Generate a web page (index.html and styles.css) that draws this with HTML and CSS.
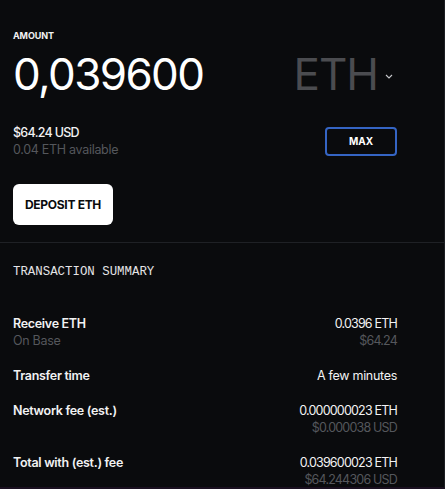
FILE: index.html
```html
<!DOCTYPE html>
<html lang="en">
<head>
  <meta charset="UTF-8">
  <meta name="viewport" content="width=device-width, initial-scale=1.0">
  <title>Deposit</title>
  <link rel="stylesheet" href="styles.css">
</head>
<body>

  <!-- Amount entry -->
  <section class="amount">
    <div class="label">AMOUNT</div>
    <div class="amount-row">
      <span class="amount-value">0,039600</span>
      <button class="currency">
        ETH
        <svg class="chevron" width="8" height="5" viewBox="0 0 8 5"><path d="M1 1l3 3 3-3" fill="none" stroke="#c8c9cc" stroke-width="1.1"/></svg>
      </button>
    </div>
    <div class="balance-row">
      <div>
        <div class="usd num">$64.24 USD</div>
        <div class="muted">0.04 ETH available</div>
      </div>
      <button class="max-button">MAX</button>
    </div>
    <button class="deposit-button">DEPOSIT ETH</button>
  </section>

  <!-- Summary -->
  <section class="summary">
    <h2>TRANSACTION SUMMARY</h2>
    <div class="rows">
      <div class="row">
        <div>
          <div class="row-label">Receive ETH</div>
          <div class="muted">On Base</div>
        </div>
        <div class="right">
          <div class="row-value num">0.0396 ETH</div>
          <div class="muted num">$64.24</div>
        </div>
      </div>
      <div class="row">
        <div class="row-label">Transfer time</div>
        <div class="row-value">A few minutes</div>
      </div>
      <div class="row">
        <div class="row-label">Network fee (est.)</div>
        <div class="right">
          <div class="row-value num">0.000000023 ETH</div>
          <div class="muted num">$0.000038 USD</div>
        </div>
      </div>
      <div class="row">
        <div class="row-label">Total with (est.) fee</div>
        <div class="right">
          <div class="row-value num">0.039600023 ETH</div>
          <div class="muted num">$64.244306 USD</div>
        </div>
      </div>
    </div>
  </section>

</body>
</html>
```

FILE: styles.css
```css
/* Reset */
* {
  margin: 0;
  padding: 0;
  box-sizing: border-box;
}

body {
  font-family: Inter, "Noto Sans", sans-serif;
  background-color: #0a0b0d;
  color: #f2f2f3;
  width: 445px;
  height: 489px;
  overflow: hidden;
  border-right: 1px solid #1c1e22;
  border-bottom: 2px solid #1a1020;
}

button {
  font-family: inherit;
  cursor: pointer;
}

/* Amount section */
.amount {
  padding: 30px 47px 17px 13px;
  border-bottom: 1px solid #1f2125;
}

.label {
  font-size: 9px;
  line-height: 12px;
  font-weight: 700;
  letter-spacing: -0.1px;
}

.amount-row {
  display: flex;
  align-items: center;
  justify-content: space-between;
  margin-top: 8px;
  height: 48px;
}

.amount-value {
  font-size: 44px;
  line-height: 48px;
  font-weight: 400;
  letter-spacing: -1.6px;
  color: #ffffff;
}

.currency {
  display: flex;
  align-items: center;
  gap: 7px;
  padding-right: 4px;
  background: none;
  border: none;
  color: #4b4c50;
  font-size: 44px;
  line-height: 48px;
  font-weight: 400;
  letter-spacing: -1px;
}

.chevron {
  margin-top: 4px;
}

.balance-row {
  display: flex;
  align-items: center;
  justify-content: space-between;
  margin-top: 26px;
}

.usd {
  font-size: 12.5px;
  line-height: 17px;
  font-weight: 500;
  letter-spacing: -0.3px;
}

.muted {
  color: #55575c;
  font-size: 12.5px;
  line-height: 17px;
  letter-spacing: -0.3px;
}

/* numbers sit tighter than words */
.num {
  letter-spacing: -0.7px;
}

.max-button {
  width: 72px;
  height: 29px;
  background-color: #0a0b0d;
  border: 2px solid #3565c4;
  border-radius: 4px;
  color: #ffffff;
  font-size: 10px;
  font-weight: 700;
}

.deposit-button {
  margin-top: 26px;
  width: 100px;
  height: 41px;
  background-color: #ffffff;
  border: none;
  border-radius: 6px;
  color: #0a0b0d;
  font-size: 12px;
  font-weight: 700;
  letter-spacing: -0.3px;
}

/* Summary section */
.summary {
  padding: 21px 47px 0 13px;
}

.summary h2 {
  font-family: "Liberation Mono", "DejaVu Sans Mono", monospace;
  font-size: 12.4px;
  line-height: 16px;
  font-weight: 400;
  color: #e4e4e6;
}

.rows {
  display: flex;
  flex-direction: column;
  gap: 18px;
  margin-top: 35px;
}

.row {
  display: flex;
  justify-content: space-between;
  align-items: flex-start;
}

.right {
  text-align: right;
}

.row-label {
  font-size: 12.5px;
  line-height: 17px;
  font-weight: 600;
  letter-spacing: -0.3px;
}

.row-value {
  font-size: 12.5px;
  line-height: 17px;
  font-weight: 400;
  letter-spacing: -0.3px;
}

.row-value.num,
.muted.num {
  letter-spacing: -0.8px;
}
```
